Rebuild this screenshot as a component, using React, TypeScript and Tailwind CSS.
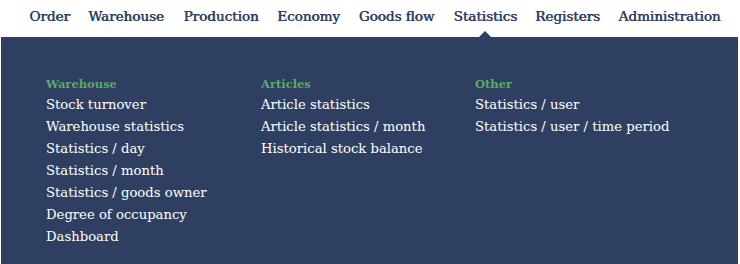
const nav = [
  { label: 'Order', w: 'w-[57px]' },
  { label: 'Warehouse', w: 'w-[96px]' },
  { label: 'Production', w: 'w-[94px]' },
  { label: 'Economy', w: 'w-[81px]' },
  { label: 'Goods flow', w: 'w-[95px]' },
  { label: 'Statistics', w: 'w-[82.5px]' },
  { label: 'Registers', w: 'w-[82px]' },
  { label: 'Administration', w: 'w-[122px]' },
]

const columns = [
  {
    title: 'Warehouse',
    items: [
      'Stock turnover',
      'Warehouse statistics',
      'Statistics / day',
      'Statistics / month',
      'Statistics / goods owner',
      'Degree of occupancy',
      'Dashboard',
    ],
  },
  { title: 'Articles', items: ['Article statistics', 'Article statistics / month', 'Historical stock balance'] },
  { title: 'Other', items: ['Statistics / user', 'Statistics / user / time period'] },
]

export default function App() {
  return (
    <div className="w-[740px] h-[264px] bg-white overflow-hidden" style={{ fontFamily: '"DejaVu Serif", "Liberation Serif", serif' }}>
      <nav className="h-[37px] flex pl-[21px] text-[13.5px] text-[#2e3f60] [text-shadow:0.6px_0_0_#2e3f60]">
        {nav.map((item) => (
          <div key={item.label} className={`relative h-full flex items-center justify-center pb-[5px] whitespace-nowrap ${item.w}`}>
            <span>{item.label}</span>
            {item.label === 'Statistics' && (
              <span className="absolute left-1/2 -translate-x-1/2 bottom-0 w-0 h-0 border-x-[6px] border-x-transparent border-b-[6px] border-b-[#2f3f62]" />
            )}
          </div>
        ))}
      </nav>

      <div className="ml-px mr-[2px] h-[227px] bg-[#2f3f62] pt-[38px] pl-[45px] grid grid-cols-[215px_214px_1fr]">
        {columns.map((col) => (
          <div key={col.title}>
            <h4 className="text-[11.5px] font-bold text-[#5aaa6a] leading-[18px]">{col.title}</h4>
            <ul className="mt-px">
              {col.items.map((item) => (
                <li key={item} className="text-[13.2px] leading-[22px] text-white whitespace-nowrap">
                  {item}
                </li>
              ))}
            </ul>
          </div>
        ))}
      </div>
    </div>
  )
}
